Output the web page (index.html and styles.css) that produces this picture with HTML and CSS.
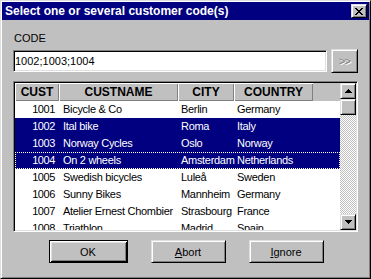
FILE: index.html
```html
<!DOCTYPE html>
<html lang="en">
<head>
    <meta charset="UTF-8">
    <meta name="viewport" content="width=device-width, initial-scale=1.0">
    <title>Customer codes</title>
    <link rel="stylesheet" href="styles.css">
</head>
<body>
    <div class="window">
        <div class="titlebar">
            <span class="title">Select one or several customer code(s)</span>
            <span class="close">
                <svg width="8" height="7" viewBox="0 0 8 7" shape-rendering="crispEdges">
                    <path d="M0 0h2v1h-2z M6 0h2v1h-2z M1 1h2v1h-2z M5 1h2v1h-2z M2 2h4v1h-4z M3 3h2v1h-2z M2 4h4v1h-4z M1 5h2v1h-2z M5 5h2v1h-2z M0 6h2v1h-2z M6 6h2v1h-2z" fill="#000"/>
                </svg>
            </span>
        </div>

        <div class="content">
            <div class="label">CODE</div>
            <div class="code_row">
                <div class="code_input">1002;1003;1004</div>
                <span class="btn more">&gt;&gt;</span>
            </div>

            <div class="grid">
                <div class="grid_main">
                    <div class="head">
                        <span class="c_cust">CUST</span>
                        <span class="c_name">CUSTNAME</span>
                        <span class="c_city">CITY</span>
                        <span class="c_country">COUNTRY</span>
                        <span class="c_fill"></span>
                    </div>
                    <div class="row">
                        <span class="c_cust">1001</span><span class="c_name">Bicycle &amp; Co</span><span class="c_city">Berlin</span><span class="c_country">Germany</span>
                    </div>
                    <div class="row selected">
                        <span class="c_cust">1002</span><span class="c_name">Ital bike</span><span class="c_city">Roma</span><span class="c_country">Italy</span>
                    </div>
                    <div class="row selected">
                        <span class="c_cust">1003</span><span class="c_name">Norway Cycles</span><span class="c_city">Oslo</span><span class="c_country">Norway</span>
                    </div>
                    <div class="row selected focus">
                        <span class="c_cust">1004</span><span class="c_name">On 2 wheels</span><span class="c_city">Amsterdam</span><span class="c_country">Netherlands</span>
                    </div>
                    <div class="row">
                        <span class="c_cust">1005</span><span class="c_name">Swedish bicycles</span><span class="c_city">Luleå</span><span class="c_country">Sweden</span>
                    </div>
                    <div class="row">
                        <span class="c_cust">1006</span><span class="c_name">Sunny Bikes</span><span class="c_city">Mannheim</span><span class="c_country">Germany</span>
                    </div>
                    <div class="row">
                        <span class="c_cust">1007</span><span class="c_name">Atelier Ernest Chombier</span><span class="c_city">Strasbourg</span><span class="c_country">France</span>
                    </div>
                    <div class="row">
                        <span class="c_cust">1008</span><span class="c_name">Triathlon</span><span class="c_city">Madrid</span><span class="c_country">Spain</span>
                    </div>
                </div>
                <div class="scroll">
                    <span class="bevel arrow">
                        <svg width="7" height="4" viewBox="0 0 7 4" shape-rendering="crispEdges"><path d="M3 0h1v1h1v1h1v1h1v1h-7v-1h1v-1h1v-1h1z" fill="#000"/></svg>
                    </span>
                    <span class="bevel thumb"></span>
                    <span class="track"></span>
                    <span class="bevel arrow">
                        <svg width="7" height="4" viewBox="0 0 7 4" shape-rendering="crispEdges"><path d="M0 0h7v1h-1v1h-1v1h-1v1h-1v-1h-1v-1h-1v-1h-1z" fill="#000"/></svg>
                    </span>
                </div>
            </div>

            <div class="actions">
                <span class="btn default">OK</span>
                <span class="btn"><u>A</u>bort</span>
                <span class="btn"><u>I</u>gnore</span>
            </div>
        </div>
    </div>
</body>
</html>
```

FILE: styles.css
```css
*{
    margin: 0;
    padding: 0;
    box-sizing: border-box;
}

body{
    background-color: #c0c0c0;
    font-family: "Liberation Sans", Arial, sans-serif;
    font-size: 11px;
    color: #000;
}

.window{
    width: 371px;
    height: 279px;
    padding: 1px;
    background-color: #c0c0c0;
    border: 1px solid;
    border-color: #dfdfdf #000 #000 #dfdfdf;
    box-shadow: inset 1px 1px #fff, inset -1px -1px #808080;
}

.titlebar{
    display: flex;
    align-items: center;
    justify-content: space-between;
    height: 18px;
    padding: 0 2px 0 3px;
    background-color: #000080;
}

.titlebar .title{
    color: #fff;
    font-weight: bold;
    font-size: 12px;
}

.bevel, .close, .btn{
    background-color: #c0c0c0;
    border: 1px solid;
    border-color: #dfdfdf #000 #000 #dfdfdf;
    box-shadow: inset 1px 1px #fff, inset -1px -1px #808080;
}

.close{
    display: flex;
    align-items: center;
    justify-content: center;
    width: 16px;
    height: 14px;
}

.content{
    display: flex;
    flex-direction: column;
    padding: 11px 11px 0 11px;
}

.label{
    height: 13px;
    line-height: 15px;
    padding-left: 1px;
    margin-bottom: 5px;
}

.code_row{
    display: flex;
    align-items: center;
    gap: 4px;
    height: 24px;
}

.code_input{
    flex: 1;
    height: 22px;
    line-height: 18px;
    padding-top: 1px;
    padding-left: 1px;
    background-color: #fff;
    border: 1px solid;
    border-color: #808080 #fff #fff #808080;
    box-shadow: inset 1px 1px #000, inset -1px -1px #dfdfdf;
}

.btn{
    display: flex;
    align-items: center;
    justify-content: center;
}

.more{
    width: 27px;
    height: 24px;
    color: #808080;
    text-shadow: 1px 1px #fff;
    letter-spacing: -1px;
}

.grid{
    display: flex;
    height: 151px;
    margin-top: 8px;
    padding: 1px;
    background-color: #fff;
    border: 1px solid;
    border-color: #808080 #fff #fff #808080;
    box-shadow: inset 1px 1px #000, inset -1px -1px #dfdfdf;
}

.grid_main{
    flex: 1;
    overflow: hidden;
}

.head, .row{
    display: flex;
    white-space: nowrap;
}

.head{
    height: 18px;
    background-color: #c0c0c0;
    font-size: 12px;
    font-weight: bold;
}

.head span{
    display: flex;
    align-items: center;
    justify-content: center;
    box-shadow: inset 1px 1px #fff, inset -1px -1px #808080;
}

.head .c_fill{
    flex: 1;
    box-shadow: none;
}

.row{
    height: 17px;
    line-height: 17px;
    letter-spacing: -0.3px;
}

.row span{
    flex-shrink: 0;
}

.row.selected{
    background-color: #000080;
    color: #fff;
}

.row.focus{
    outline: 1px dotted #fff;
    outline-offset: -1px;
}

.c_cust{
    width: 44px;
}

.c_name{
    width: 119px;
}

.c_city{
    width: 56px;
}

.c_country{
    width: 79px;
}

.row .c_cust{
    text-align: right;
    padding-right: 4px;
    letter-spacing: -0.4px;
}

.row .c_name{
    padding-left: 4px;
}

.row .c_city, .row .c_country{
    padding-left: 3px;
}

.scroll{
    display: flex;
    flex-direction: column;
    width: 16px;
}

.scroll .arrow, .scroll .thumb{
    display: flex;
    align-items: center;
    justify-content: center;
    height: 16px;
}

.scroll .track{
    flex: 1;
    background: repeating-conic-gradient(#c0c0c0 0 25%, #fff 0 50%) 0 0 / 2px 2px;
}

.actions{
    display: flex;
    justify-content: center;
    gap: 23px;
    margin-top: 8px;
    padding-left: 1px;
}

.actions .btn{
    width: 75px;
    height: 23px;
}

.actions .default{
    width: 79px;
    border-color: #000;
    box-shadow: inset 1px 1px #fff, inset -1px -1px #000, inset 2px 2px #dfdfdf, inset -2px -2px #808080;
}
```
